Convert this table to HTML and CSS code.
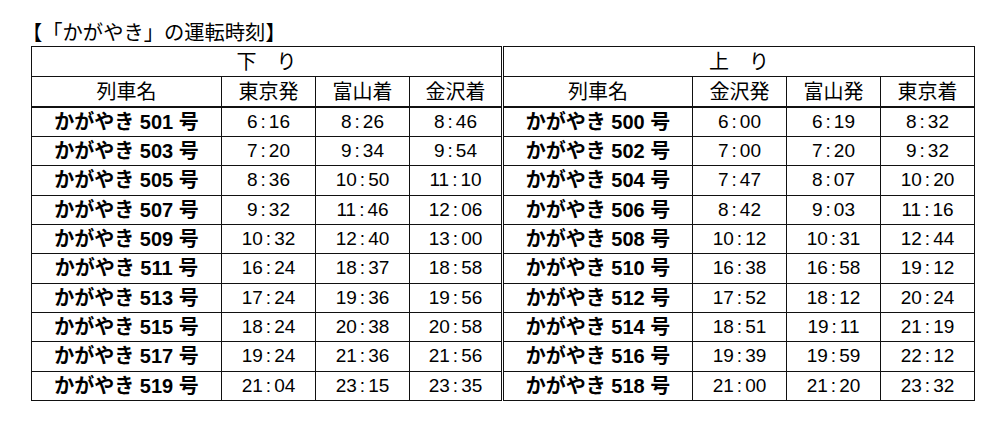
FILE: index.html
```html
<!DOCTYPE html>
<html lang="ja">
<head>
<meta charset="utf-8">
<title>「かがやき」の運転時刻</title>
<link rel="stylesheet" href="styles.css">
</head>
<body>
<div class="page">
  <h1 class="title">【「かがやき」の運転時刻】</h1>
  <div class="tables">
    <table class="tt tt-down">
      <colgroup>
        <col class="w-name-down"><col class="w-time"><col class="w-time"><col class="w-time-narrow">
      </colgroup>
      <tr class="dir"><th colspan="4">下　り</th></tr>
      <tr class="head"><th>列車名</th><th>東京発</th><th>富山着</th><th>金沢着</th></tr>
      <tr class="first"><td class="name">かがやき 501 号</td><td>6<span class="c">:</span>16</td><td>8<span class="c">:</span>26</td><td>8<span class="c">:</span>46</td></tr>
      <tr><td class="name">かがやき 503 号</td><td>7<span class="c">:</span>20</td><td>9<span class="c">:</span>34</td><td>9<span class="c">:</span>54</td></tr>
      <tr><td class="name">かがやき 505 号</td><td>8<span class="c">:</span>36</td><td>10<span class="c">:</span>50</td><td>11<span class="c">:</span>10</td></tr>
      <tr><td class="name">かがやき 507 号</td><td>9<span class="c">:</span>32</td><td>11<span class="c">:</span>46</td><td>12<span class="c">:</span>06</td></tr>
      <tr><td class="name">かがやき 509 号</td><td>10<span class="c">:</span>32</td><td>12<span class="c">:</span>40</td><td>13<span class="c">:</span>00</td></tr>
      <tr><td class="name">かがやき 511 号</td><td>16<span class="c">:</span>24</td><td>18<span class="c">:</span>37</td><td>18<span class="c">:</span>58</td></tr>
      <tr><td class="name">かがやき 513 号</td><td>17<span class="c">:</span>24</td><td>19<span class="c">:</span>36</td><td>19<span class="c">:</span>56</td></tr>
      <tr><td class="name">かがやき 515 号</td><td>18<span class="c">:</span>24</td><td>20<span class="c">:</span>38</td><td>20<span class="c">:</span>58</td></tr>
      <tr><td class="name">かがやき 517 号</td><td>19<span class="c">:</span>24</td><td>21<span class="c">:</span>36</td><td>21<span class="c">:</span>56</td></tr>
      <tr><td class="name">かがやき 519 号</td><td>21<span class="c">:</span>04</td><td>23<span class="c">:</span>15</td><td>23<span class="c">:</span>35</td></tr>
    </table>
    <table class="tt tt-up">
      <colgroup>
        <col class="w-name-up"><col class="w-time"><col class="w-time"><col class="w-time">
      </colgroup>
      <tr class="dir"><th colspan="4">上　り</th></tr>
      <tr class="head"><th>列車名</th><th>金沢発</th><th>富山発</th><th>東京着</th></tr>
      <tr class="first"><td class="name">かがやき 500 号</td><td>6<span class="c">:</span>00</td><td>6<span class="c">:</span>19</td><td>8<span class="c">:</span>32</td></tr>
      <tr><td class="name">かがやき 502 号</td><td>7<span class="c">:</span>00</td><td>7<span class="c">:</span>20</td><td>9<span class="c">:</span>32</td></tr>
      <tr><td class="name">かがやき 504 号</td><td>7<span class="c">:</span>47</td><td>8<span class="c">:</span>07</td><td>10<span class="c">:</span>20</td></tr>
      <tr><td class="name">かがやき 506 号</td><td>8<span class="c">:</span>42</td><td>9<span class="c">:</span>03</td><td>11<span class="c">:</span>16</td></tr>
      <tr><td class="name">かがやき 508 号</td><td>10<span class="c">:</span>12</td><td>10<span class="c">:</span>31</td><td>12<span class="c">:</span>44</td></tr>
      <tr><td class="name">かがやき 510 号</td><td>16<span class="c">:</span>38</td><td>16<span class="c">:</span>58</td><td>19<span class="c">:</span>12</td></tr>
      <tr><td class="name">かがやき 512 号</td><td>17<span class="c">:</span>52</td><td>18<span class="c">:</span>12</td><td>20<span class="c">:</span>24</td></tr>
      <tr><td class="name">かがやき 514 号</td><td>18<span class="c">:</span>51</td><td>19<span class="c">:</span>11</td><td>21<span class="c">:</span>19</td></tr>
      <tr><td class="name">かがやき 516 号</td><td>19<span class="c">:</span>39</td><td>19<span class="c">:</span>59</td><td>22<span class="c">:</span>12</td></tr>
      <tr><td class="name">かがやき 518 号</td><td>21<span class="c">:</span>00</td><td>21<span class="c">:</span>20</td><td>23<span class="c">:</span>32</td></tr>
    </table>
  </div>
</div>
</body>
</html>
```
FILE: styles.css
```css
html, body {
  margin: 0;
  padding: 0;
  background: #fff;
}

body {
  font-family: "Liberation Sans", "Noto Sans CJK JP", sans-serif;
  color: #000;
  text-spacing-trim: space-all;
}

.page {
  padding: 21px 0 0 22px;
}

.title {
  margin: 0;
  height: 25px;
  font-size: 20.3px;
  line-height: 24px;
  font-weight: normal;
  white-space: nowrap;
  text-spacing-trim: space-all;
}

.tables {
  display: flex;
  gap: 1px;
  margin-left: 9px;
}

.tt {
  border-collapse: separate;
  border-spacing: 0;
  table-layout: fixed;
  border-top: 1px solid #111;
  border-left: 1px solid #111;
}

.tt-down { width: 471px; }
.tt-up { width: 472px; }

.w-name-down { width: 190px; }
.w-name-up { width: 189px; }
.w-time { width: 94px; }
.w-time-narrow { width: 92px; }

.tt th,
.tt td {
  box-sizing: border-box;
  padding: 0;
  border-right: 1px solid #111;
  border-bottom: 1px solid #111;
  text-align: center;
  vertical-align: middle;
  font-weight: normal;
  white-space: nowrap;
  line-height: 22px;
}

.tt th {
  font-size: 20px;
}

.dir th {
  height: 30px;
}

.head th {
  height: 31px;
  border-bottom-width: 2px;
}

.tt td {
  height: 29.33px;
  font-size: 19px;
}

.tt tr.first td {
  height: 29px;
}

.tt td.name {
  font-size: 20px;
  font-weight: bold;
}

.c {
  margin: 0 3px;
}
```
